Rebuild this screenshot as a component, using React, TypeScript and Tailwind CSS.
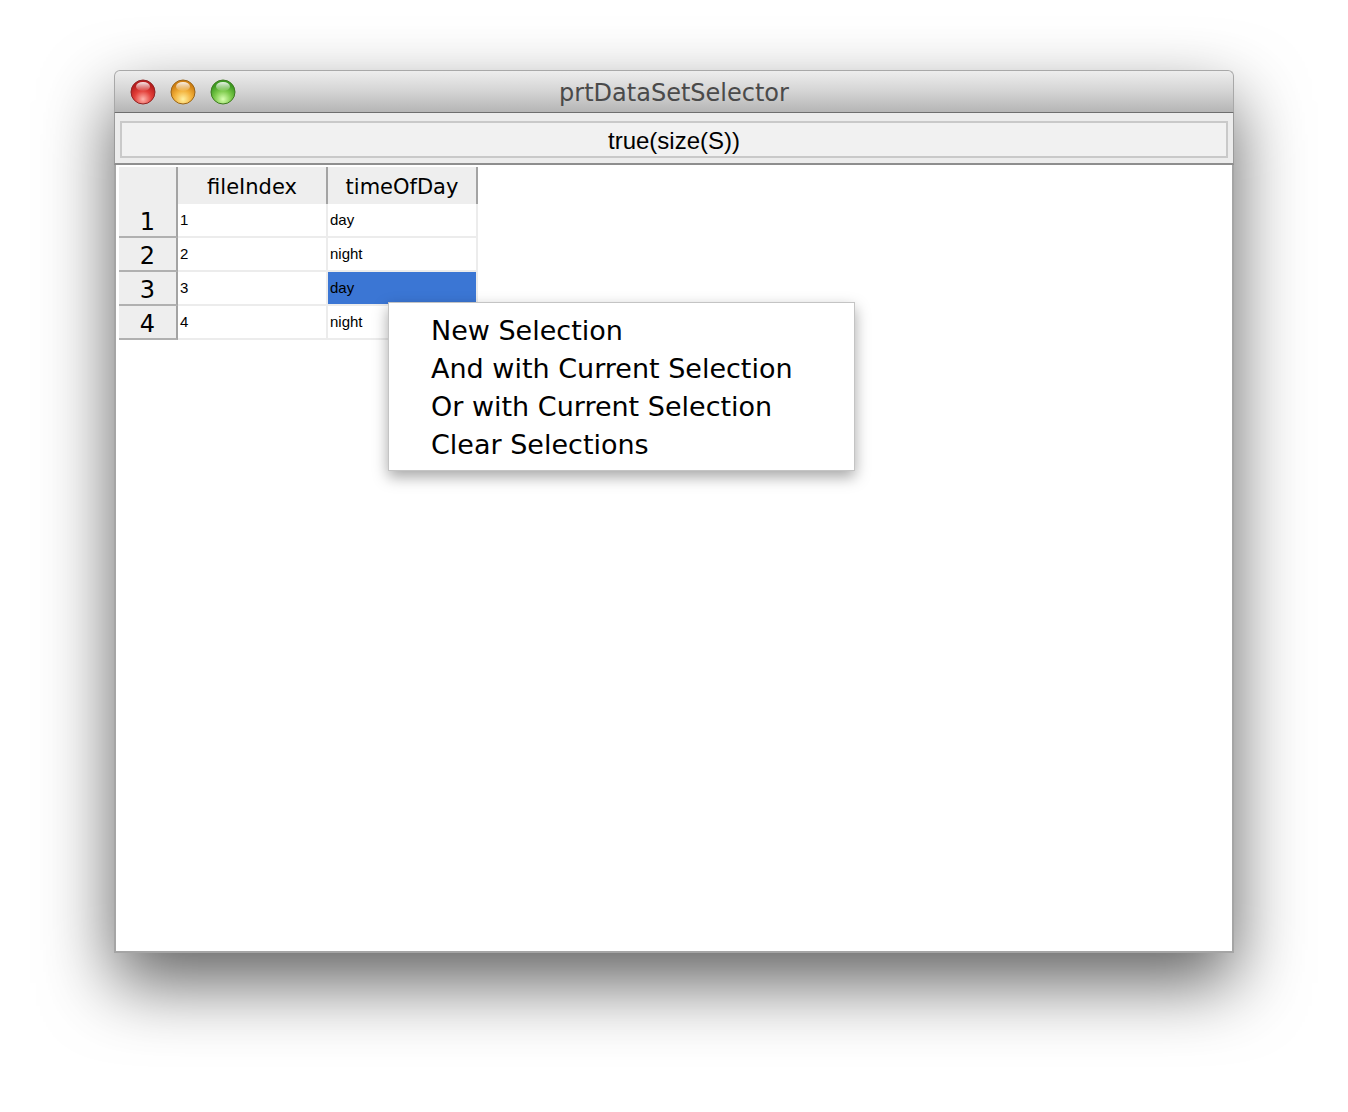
import React from "react";

function Light({ id, c1, c2, c3, edge }: { id: string; c1: string; c2: string; c3: string; edge: string }) {
  return (
    <svg width="26" height="26" viewBox="0 0 26 26">
      <defs>
        <radialGradient id={`${id}-g`} cx="50%" cy="80%" r="65%">
          <stop offset="0%" stopColor={c1} />
          <stop offset="55%" stopColor={c2} />
          <stop offset="100%" stopColor={c3} />
        </radialGradient>
        <linearGradient id={`${id}-h`} x1="0" y1="0" x2="0" y2="1">
          <stop offset="0%" stopColor="#ffffff" stopOpacity="0.9" />
          <stop offset="100%" stopColor="#ffffff" stopOpacity="0.05" />
        </linearGradient>
      </defs>
      <circle cx="13" cy="13" r="12" fill={`url(#${id}-g)`} stroke={edge} strokeWidth="1" />
      <ellipse cx="13" cy="7.5" rx="7" ry="4.5" fill={`url(#${id}-h)`} />
    </svg>
  );
}

const rows = [
  { n: "1", a: "1", b: "day", sel: false },
  { n: "2", a: "2", b: "night", sel: false },
  { n: "3", a: "3", b: "day", sel: true },
  { n: "4", a: "4", b: "night", sel: false },
];

export default function App() {
  const lucida = { fontFamily: '"DejaVu Sans", "Open Sans", sans-serif' };
  const helv = { fontFamily: '"Liberation Sans", Arial, sans-serif' };
  return (
    <div className="w-[1348px] h-[1112px] bg-white pt-[70px] pl-[114px]">
      <div className="relative w-[1120px] h-[883px] flex flex-col shadow-[0_30px_70px_rgba(0,0,0,0.62)] rounded-t-[6px]">
        {/* title bar */}
        <div className="h-[43px] shrink-0 rounded-t-[6px] border border-[#a8a8a8] border-b-[#6e6e6e] bg-gradient-to-b from-[#ededed] via-[#d4d4d4] to-[#b5b5b5] flex items-center relative">
          <div className="flex items-center gap-[14px] pl-[15px] pt-[1px]">
            <Light id="r" c1="#ffb4ac" c2="#e3403a" c3="#b81d1d" edge="#8f2424" />
            <Light id="y" c1="#fff0a0" c2="#f3b23c" c3="#d08013" edge="#98651a" />
            <Light id="gr" c1="#d8ffb0" c2="#7bc94a" c3="#3d9a21" edge="#3f7a22" />
          </div>
          <div className="absolute inset-0 flex items-center justify-center text-[24px] text-[#4a4a4a] pt-[2px]" style={lucida}>
            prtDataSetSelector
          </div>
        </div>
        {/* toolbar */}
        <div className="h-[52px] shrink-0 bg-[#ececec] border-x border-[#9a9a9a] px-[5px] pt-[8px] border-b-2 border-b-[#8e8e8e]">
          <div className="h-[37px] border-2 border-[#c9c9c9] bg-[#f1f1f1] flex items-center justify-center text-[24px] text-black pt-[2px]" style={helv}>
            true(size(S))
          </div>
        </div>
        {/* content */}
        <div className="flex-1 bg-white border-x-2 border-b-2 border-[#a5a5a5] relative">
          <div className="pl-[3px] pt-[2px]">
            {/* header */}
            <div className="flex h-[37px]">
              <div className="w-[59px] bg-[#eeeeee] border-r-2 border-[#a3a3a3]" />
              <div className="w-[150px] bg-[#eeeeee] border-r-2 border-[#a3a3a3] flex items-center justify-center text-[21px] text-black pt-[4px]" style={lucida}>
                fileIndex
              </div>
              <div className="w-[150px] bg-[#eeeeee] border-r-2 border-[#a3a3a3] flex items-center justify-center text-[21px] text-black pt-[4px]" style={lucida}>
                timeOfDay
              </div>
            </div>
            {rows.map((r) => (
              <div key={r.n} className="flex h-[34px]">
                <div className="w-[59px] bg-[#eeeeee] border-r-2 border-b-2 border-r-[#a3a3a3] border-b-[#b0b0b0] flex items-center justify-center text-[24px] text-black pt-[3px]" style={lucida}>
                  {r.n}
                </div>
                <div className="w-[150px] border-r-2 border-b-2 border-[#ececec] flex items-center pl-[2px] text-[15px] text-black pt-[1px]" style={helv}>
                  {r.a}
                </div>
                <div className={`w-[150px] border-r-2 border-b-2 border-[#ececec] flex items-center pl-[2px] text-[15px] text-black pt-[1px] ${r.sel ? "bg-[#3b76d4]" : ""}`} style={helv}>
                  {r.b}
                </div>
              </div>
            ))}
          </div>
          {/* context menu */}
          <div className="absolute left-[272px] top-[137px] w-[467px] h-[169px] bg-white border border-[#c4c4c4] shadow-[0_6px_14px_rgba(0,0,0,0.35)] pl-[42px] pt-[9px] flex flex-col text-[27px] leading-[38px] text-black" style={lucida}>
            <div>New Selection</div>
            <div>And with Current Selection</div>
            <div>Or with Current Selection</div>
            <div>Clear Selections</div>
          </div>
        </div>
      </div>
    </div>
  );
}
